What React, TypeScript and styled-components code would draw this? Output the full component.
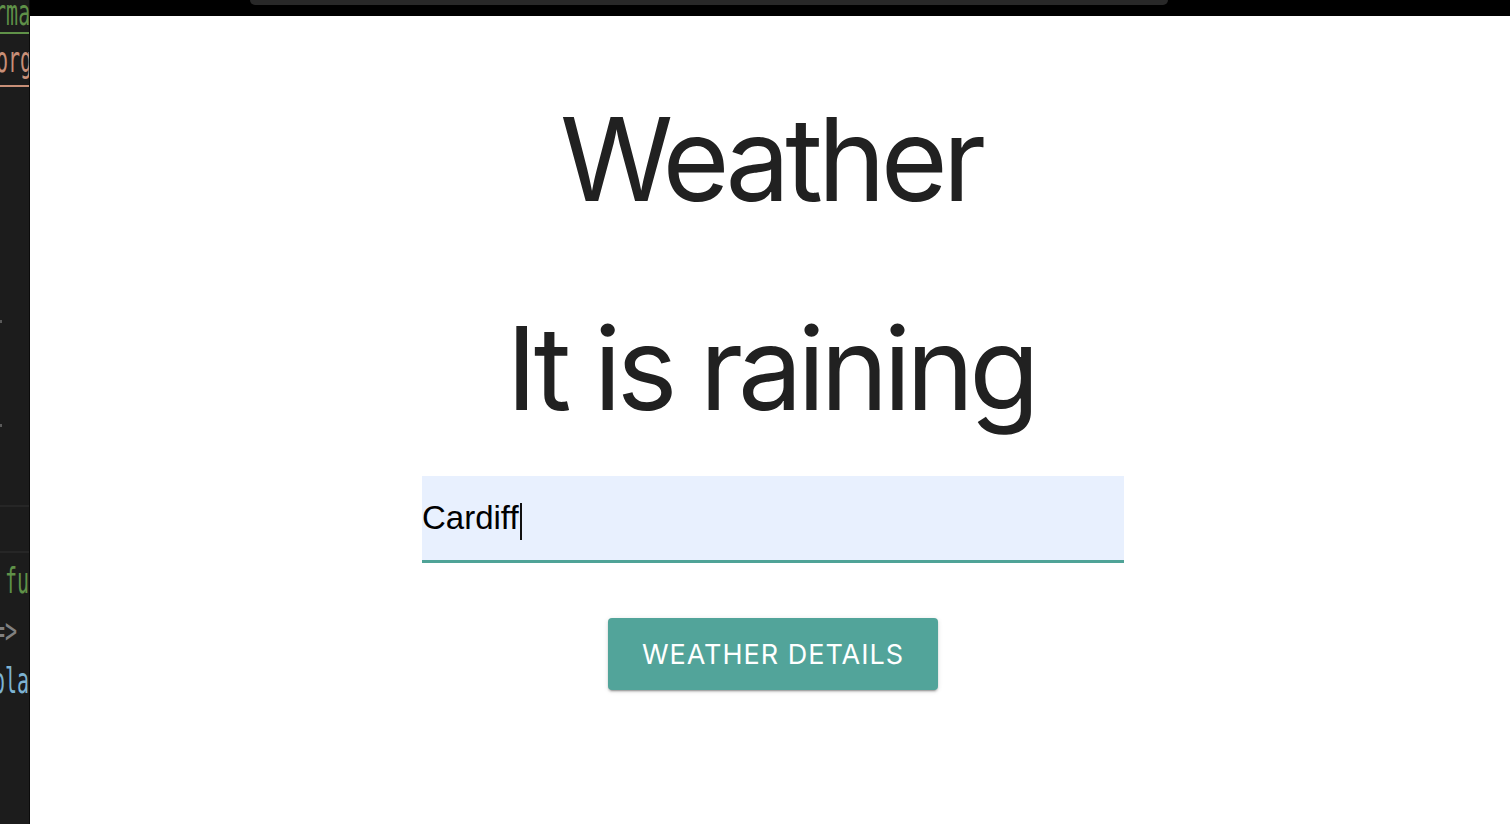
import React from 'react';
import styled, { createGlobalStyle } from 'styled-components';

const GlobalStyle = createGlobalStyle`
  html, body {
    margin: 0;
    padding: 0;
    background: #ffffff;
  }
  body {
    font-family: Inter, Roboto, "Noto Sans", sans-serif;
  }
`;

const Page = styled.div`
  width: 1510px;
  height: 824px;
  display: flex;
  flex-direction: row;
  overflow: hidden;
`;

// the sliver of code editor peeking in on the left
const Editor = styled.div`
  width: 29px;
  flex: 0 0 29px;
  background: #1c1c1c;
  border-right: 1px solid #0b0b0b;
  display: flex;
  flex-direction: column;
  overflow: hidden;
  font-family: "DejaVu Sans Mono", "Liberation Mono", monospace;
`;

const CodeLine = styled.div<{ $color: string; $top: number; $pad?: number; $under?: string }>`
  margin-top: ${(p) => p.$top}px;
  height: 30px;
  padding-bottom: ${(p) => p.$pad ?? 0}px;
  display: flex;
  align-items: center;
  color: ${(p) => p.$color};
  white-space: nowrap;
  border-bottom: ${(p) => (p.$under ? `2px solid ${p.$under}` : 'none')};
`;

const Glyphs = styled.span<{ $indent: number }>`
  display: inline-block;
  margin-left: ${(p) => p.$indent}px;
  font-size: 20px;
  line-height: 1;
  transform: scaleY(1.8);
  transform-origin: center;
`;

const Tick = styled.div<{ $top: number }>`
  margin-top: ${(p) => p.$top}px;
  width: 2px;
  height: 3px;
  background: #5a5a5a;
`;

const Divider = styled.div<{ $top: number }>`
  margin-top: ${(p) => p.$top}px;
  height: 2px;
  background: #262626;
`;

const Main = styled.div`
  flex: 1;
  display: flex;
  flex-direction: column;
`;

const TopBar = styled.div`
  height: 16px;
  background: #000;
  padding-left: 220px;
`;

const Notch = styled.div`
  width: 918px;
  height: 5px;
  background: #282828;
  border-radius: 0 0 12px 12px;
`;

const Content = styled.div`
  display: flex;
  flex-direction: column;
  align-items: center;
  padding-left: 6px;
  color: #212121;
`;

const Heading = styled.h1<{ $top: number }>`
  margin: ${(p) => p.$top}px 0 0;
  font-size: 115px;
  font-weight: 400;
  line-height: 1;
  letter-spacing: -5px;
  padding-right: 5px;
`;

const Field = styled.div`
  position: relative;
  margin-top: 50px;
`;

const CityInput = styled.input`
  display: block;
  width: 702px;
  height: 84px;
  box-sizing: content-box;
  padding: 0;
  border: none;
  border-bottom: 3px solid #4fa397;
  background: #e8f0fe;
  font-family: "Liberation Sans", Arial, sans-serif;
  font-size: 33px;
  color: #000;
  outline: none;
  caret-color: transparent;
`;

const Caret = styled.span`
  position: absolute;
  left: 98px;
  top: 27px;
  width: 2px;
  height: 37px;
  background: #111;
`;

const DetailsButton = styled.button`
  margin-top: 55px;
  width: 330px;
  height: 72px;
  border: none;
  border-radius: 4px;
  background: #52a49a;
  color: #fff;
  font-family: Inter, Roboto, sans-serif;
  font-size: 27px;
  font-weight: 400;
  letter-spacing: 1px;
  text-transform: uppercase;
  box-shadow: 0 3px 1px -2px rgba(0, 0, 0, 0.2), 0 2px 2px 0 rgba(0, 0, 0, 0.14),
    0 1px 5px 0 rgba(0, 0, 0, 0.12);
  cursor: pointer;
`;

export default function App(): JSX.Element {
  return (
    <Page>
      <GlobalStyle />
      <Editor>
        <CodeLine $color="#5f9148" $top={-3} $pad={5} $under="#5f9148">
          <Glyphs $indent={-30}>format</Glyphs>
        </CodeLine>
        <CodeLine $color="#c88f77" $top={10} $pad={11} $under="#c88f77">
          <Glyphs $indent={-4}>org</Glyphs>
        </CodeLine>
        <Tick $top={233} />
        <Tick $top={101} />
        <Divider $top={78} />
        <Divider $top={44} />
        <CodeLine $color="#5f9148" $top={12}>
          <Glyphs $indent={5}>fu</Glyphs>
        </CodeLine>
        <CodeLine $color="#808080" $top={20}>
          <Glyphs $indent={-7}>=&gt;</Glyphs>
        </CodeLine>
        <CodeLine $color="#7db3d3" $top={20}>
          <Glyphs $indent={-7}>ola</Glyphs>
        </CodeLine>
      </Editor>
      <Main>
        <TopBar>
          <Notch />
        </TopBar>
        <Content>
          <Heading $top={86}>Weather</Heading>
          <Heading $top={94}>It is raining</Heading>
          <Field>
            <CityInput defaultValue="Cardiff" />
            <Caret />
          </Field>
          <DetailsButton>Weather Details</DetailsButton>
        </Content>
      </Main>
    </Page>
  );
}
